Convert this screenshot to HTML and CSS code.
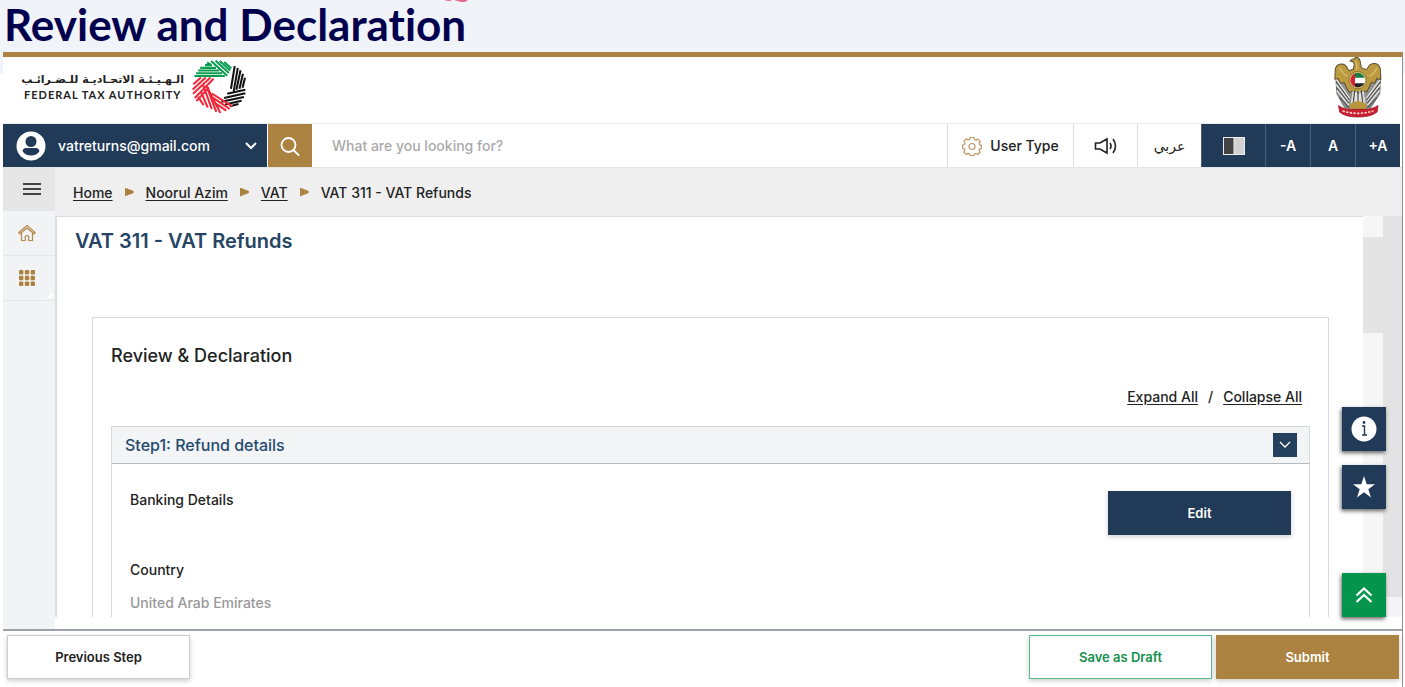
FILE: index.html
```html
<!DOCTYPE html>
<html lang="en">
<head>
<meta charset="utf-8">
<title>Review and Declaration</title>
<link rel="stylesheet" href="styles.css">
</head>
<body>
<div class="page">
  <h1 class="slide-title">Review and Declaration</h1>
  <svg class="smudge" width="40" height="3" viewBox="0 0 40 3"><path d="M4 0h6l2 1h-4zM14 0h14l-3 2h-4z" fill="#e8688c"/></svg>
  <div class="app">
    <header class="brand-bar">
      <div class="brand">
        <div class="brand-text">
          <span class="brand-ar" lang="ar" dir="rtl">الـهـيـئـة الاتحـاديـة للـضـرائـب</span>
          <span class="brand-en">FEDERAL TAX AUTHORITY</span>
        </div>
        <svg class="brand-logo" viewBox="34 20 158 158" fill="none" stroke-width="6" stroke-linecap="butt">
          <g stroke="#0a9c50"><path d="M72 35H92M58 43H104M52 51H114M46 59H122M41 67H130M78 27L88 33M90 23L137 66M103 22L142 58M115 23L146 51M128 26L149 44"/></g>
          <g stroke="#111"><path d="M159 38L148 104M168 43L156 112M176 50L164 107M183 60L173 104M189 72L182 101M190 107L137 119M190 117L128 131M186 128L120 142M179 139L131 150M170 149L145 155"/></g>
          <g stroke="#f2293a"><path d="M60 71L38 91M74 71L36 106M88 71L37 119M97 75L42 131M84 100L47 140M66 92L92 164M77 97L105 172M82 106L117 175M60 112L80 159M52 128L68 152M92 118L152 156M95 130L144 163M102 146L134 168"/></g>
        </svg>
      </div>
      <svg class="emblem" viewBox="44 26 142 182">
        <path d="M48 78l39-4 14 40-8 62h44l-8-62 16-40 38 4-3 58-26 40-34 8h-12l-34-8-22-40z" fill="#8f9190" stroke="#55554f" stroke-width="2"/>
        <path d="M50 92l40 58M50 108l38 50M52 126l36 44M182 92l-42 58M182 108l-40 50M179 126l-36 44" stroke="#e4e4e2" stroke-width="4.500"/>
        <path d="M50 100l39 54M51 117l36 46M182 100l-41 54M180 117l-37 46M60 146l28 31M172 146l-29 31" stroke="#4b4c4b" stroke-width="3"/>
        <path d="M106 29c8-4 15 2 16 12l3 17 14 6c6-2 6-16 18-18 13-2 25 2 25 22l1 26-12-4-6 14-10-2-14 28-12-4-12 8-14-8-14 6-16-30-10 2-8-14-9 2 1-24c0-18 12-22 22-21 14 3 14 16 20 20l12-5 3-15-4-7-9-2c4-5 9-7 12-7z" fill="#bb9a40" stroke="#5e5130" stroke-width="3"/>
        <path d="M108 38q6 14 2 28M60 58q10 20 24 26M172 58q-10 20-24 26" fill="none" stroke="#d8bf70" stroke-width="4"/>
        <path d="M101 126l-7 44M110 128l-3 46M120 128l3 46M130 126l7 44" stroke="#d9d9d6" stroke-width="4"/>
        <path d="M105 127l-5 44M115 128v46M125 127l5 44" stroke="#494a4b" stroke-width="4"/>
        <path d="M91 166l24-10 25 10v15H91z" fill="#b8973d"/>
        <clipPath id="disc"><circle cx="114" cy="95" r="22"/></clipPath>
        <circle cx="114" cy="95" r="26" fill="#d7bd6a" stroke="#76602a" stroke-width="2"/>
        <g clip-path="url(#disc)"><path d="M90 70h50v50H90z" fill="#fff"/><path d="M106 70h32v18h-32z" fill="#177d43"/><path d="M106 104h32v16h-32z" fill="#222"/><path d="M90 70h16v50H90z" fill="#d52033"/></g>
        <path d="M57 171c13 10 29 11 40 11h35c17 0 30-3 43-11l-3 19c-15 12-35 15-57 15s-42-3-55-15z" fill="#c91f30" stroke="#8b1420" stroke-width="2"/>
        <path d="M69 187q45 14 92 0" fill="none" stroke="#f7d9d5" stroke-width="5" stroke-dasharray="7 4"/>
      </svg>
    </header>

    <div class="toolbar">
      <button class="account" type="button">
        <svg class="avatar" viewBox="0 0 30 30"><circle cx="15" cy="15" r="14.5" fill="#fff"/><circle cx="15" cy="10.500" r="5.5" fill="#203a57"/><path d="M6.500 20c1-4 4-3 8.500-3s7.500-1 8.500 3c-3 6-14 6-17 0z" fill="#203a57"/></svg>
        <span class="account-name">vatreturns@gmail.com</span>
        <svg width="12" height="8" viewBox="0 0 12 8" fill="none" stroke="#fff" stroke-width="2"><path d="M1 1l5 5 5-5"/></svg>
      </button>
      <button class="search-button" type="button" aria-label="Search">
        <svg width="20" height="20" viewBox="0 0 20 20" fill="none" stroke="#fff" stroke-width="1.8" stroke-linecap="round"><circle cx="8.500" cy="9" r="7"/><path d="M14 14.500l4.500 4.500"/></svg>
      </button>
      <input class="search-input" type="search" aria-label="Search" placeholder="What are you looking for?">
      <button class="tool user-type" type="button">
        <svg width="20" height="20" viewBox="0 0 20 20" fill="none" stroke="#bf9561" stroke-width="1.200" stroke-linejoin="round"><path d="M8 1.500h4l.6 2.300 1.200.5 2.100-1.200 2.400 2.500-1 2.200.4 1 1.800.5v3l-1.900.8-.5 1.200 1 2-2.300 2.200-2-1-1.300.6-.6 1.400H8.300l-.9-1.600-1.200-.5-2.200 1-2.200-2.300 1.100-2-.5-1.200-1.800-.7V9l1.900-.5.5-1.300-1.100-2.100 2.300-2.200 2 1.100 1.300-.5z"/><circle cx="10" cy="10.500" r="3"/></svg>
        <span>User Type</span>
      </button>
      <button class="tool sound" type="button" aria-label="Listen">
        <svg width="24" height="18" viewBox="0 0 24 18" fill="none" stroke="#222" stroke-width="1.600"><path d="M1.500 6H6l7-4v14l-7-4H1.500zM16 6q2 3 0 6M19 2q5 7 0 14"/></svg>
      </button>
      <button class="tool language" type="button" lang="ar">عربي</button>
      <button class="tool dark contrast" type="button" aria-label="Contrast">
        <svg width="22" height="18" viewBox="0 0 22 18"><path d="M0 0h22v18H0z" fill="#eee"/><path d="M1 1h9.500v16H1z" fill="#444"/><path d="M11.500 1H21v16h-9.500z" fill="#d2d2d2"/></svg>
      </button>
      <button class="tool dark size" type="button">-A</button>
      <button class="tool dark size" type="button">A</button>
      <button class="tool dark size" type="button">+A</button>
    </div>

    <div class="workspace">
      <nav class="rail" aria-label="Main">
        <button class="rail-item menu" type="button" aria-label="Menu"><svg width="18" height="14" viewBox="0 0 18 14" stroke="#444" stroke-width="1.800"><path d="M0 2h18M0 7h18M0 12h18"/></svg></button>
        <button class="rail-item" type="button" aria-label="Home"><svg width="18" height="18" viewBox="0 0 18 18" fill="none" stroke="#b5894a" stroke-width="1.200"><path d="M.8 8.500L9 1.500l8.200 7-1.100 1.300L9 4 1.900 9.800zM3.500 9v7.500h3.800v-4q1.700-2 3.400 0v4h3.800V9"/></svg></button>
        <button class="rail-item apps" type="button" aria-label="Services"><svg width="16" height="16" viewBox="0 0 16 16" fill="#ac8241"><g id="r"><rect width="4.400" height="4.400" rx="1"/><rect x="5.800" width="4.400" height="4.400" rx="1"/><rect x="11.600" width="4.400" height="4.400" rx="1"/></g><use href="#r" y="5.800"/><use href="#r" y="11.600"/></svg></button>
      </nav>

      <div class="main">
        <nav class="crumbs" aria-label="Breadcrumb">
          <a href="#">Home</a><i class="arrow"></i><a href="#">Noorul Azim</a><i class="arrow"></i><a href="#">VAT</a><i class="arrow"></i><span>VAT 311 - VAT Refunds</span>
        </nav>
        <div class="view">
          <main class="content">
            <h2 class="page-title">VAT 311 - VAT Refunds</h2>
            <section class="card">
              <h3 class="card-title">Review &amp; Declaration</h3>
              <div class="toggles"><a href="#">Expand All</a><span>/</span><a href="#">Collapse All</a></div>
              <section class="step">
                <header class="step-head">
                  <h4 class="step-title">Step1: Refund details</h4>
                  <button class="step-toggle" type="button" aria-label="Toggle step"><svg width="12" height="8" viewBox="0 0 12 8" fill="none" stroke="#fff" stroke-width="1.300"><path d="M1 1l5 5 5-5"/></svg></button>
                </header>
                <div class="step-body">
                  <div class="details">
                    <h5 class="label group">Banking Details</h5>
                    <div class="label">Country</div>
                    <div class="value">United Arab Emirates</div>
                  </div>
                  <button class="button edit" type="button">Edit</button>
                </div>
              </section>
            </section>
          </main>
          <div class="inner-scroll"><div class="inner-thumb"></div></div>
          <div class="outer-scroll"><div class="outer-thumb"></div></div>
          <div class="quick">
            <button class="quick-item" type="button" aria-label="Information"><svg width="26" height="26" viewBox="0 0 26 26"><circle cx="13" cy="13" r="12.500" fill="#fff"/><path d="M11 10h2.500v9M11 19h5" stroke="#203a57" stroke-width="1.400" fill="none"/><circle cx="13" cy="6.500" r="1.400" fill="#203a57"/></svg></button>
            <button class="quick-item" type="button" aria-label="Favourite"><svg width="22" height="22" viewBox="0 0 22 22"><path d="M11 0l2.700 8.200H22l-6.700 5 2.700 8.300-7-5.200-7 5.200 2.700-8.300L0 8.200h8.300z" fill="#fff"/></svg></button>
            <button class="quick-item up" type="button" aria-label="Back to top"><svg width="18" height="18" viewBox="0 0 18 18" fill="none" stroke="#fff" stroke-width="2.200"><path d="M1.500 9.500L9 2.500l7.500 7M1.500 16L9 9l7.500 7"/></svg></button>
          </div>
        </div>
      </div>
    </div>

    <footer class="actions">
      <button class="button previous" type="button">Previous Step</button>
      <button class="button draft" type="button">Save as Draft</button>
      <button class="button submit" type="button">Submit</button>
    </footer>
  </div>
</div>
</body>
</html>
```
FILE: styles.css
```css
* { box-sizing: border-box; }
body {
  margin: 0;
  background: linear-gradient(#f0f3f8 74px, #fff 74px);
  font-family: Inter, "DejaVu Sans", sans-serif;
  font-size: 14px;
  font-weight: 500;
  color: #222;
}
button, input { font: inherit; color: inherit; }
button { border: 0; padding: 0; cursor: pointer; }
h1, h2, h3, h4, h5 { margin: 0; }
a { color: inherit; text-underline-offset: 2px; }
svg { display: block; flex: none; }

.page { position: relative; display: flex; flex-direction: column; height: 100vh; }
.slide-title {
  height: 52px;
  padding-left: 4px;
  font: 700 44px/48px Lato, sans-serif;
  font-variant-ligatures: none;
  color: #00004e;
}
.smudge { position: absolute; left: 440px; top: 0; }

.app {
  flex: 1;
  min-height: 0;
  display: flex;
  flex-direction: column;
  margin: 0 2px 0 3px;
  border-top: 5px solid #ac8241;
  border-right: 1px solid #8d929a;
  background: #fff;
}

.brand-bar { display: flex; justify-content: space-between; height: 66px; padding: 0 20px 0 21px; }
.brand { display: flex; align-items: center; gap: 8px; padding-bottom: 6px; }
.brand-text { display: flex; flex-direction: column; width: 160px; }
.brand-ar { font: 700 11px/16px "DejaVu Sans", sans-serif; white-space: nowrap; }
.brand-en { font: 700 11px/14px Lato, sans-serif; letter-spacing: 1px; white-space: nowrap; }
.brand-logo { width: 54px; height: 54px; }
.emblem { width: 48px; height: 61px; }

.toolbar { display: flex; flex: none; height: 45px; padding-right: 2px; border-top: 1px solid #eee; border-bottom: 1px solid #e4e4e4; }
.account {
  display: flex;
  align-items: center;
  gap: 12px;
  width: 264px;
  padding: 0 10px 0 13px;
  background: #203a57;
  color: #fff;
}
.avatar { width: 30px; height: 30px; }
.account-name { flex: 1; text-align: left; }
.search-button { display: grid; place-items: center; width: 44px; margin-left: 1px; background: #ac8241; }
.search-input { flex: 1; min-width: 0; border: 0; padding: 0 20px; background: #fff; outline: 0; }
.search-input::placeholder { color: #aaa; opacity: 1; }
.tool { display: flex; align-items: center; justify-content: center; gap: 8px; border-left: 1px solid #ddd; background: #fff; }
.user-type { width: 126px; }
.sound, .language { width: 64px; }
.language { font-family: "DejaVu Sans", sans-serif; }
.dark { background: #203a57; border-left: 1px solid #4a6079; color: #fff; font-weight: 600; }
.contrast { width: 64px; }
.size { width: 45px; }

.workspace { flex: 1; min-height: 0; display: flex; }
.rail { display: flex; flex-direction: column; width: 52px; background: #f2f3f5; }
.rail-item { display: grid; place-items: center; height: 45px; padding-right: 4px; background: #f2f3f5; border-bottom: 1px solid #e5e6e8; }
.rail-item.menu { height: 43px; padding: 0 0 0 5px; background: #e6e6e6; }
.apps { background: linear-gradient(135deg, transparent 50%, #fff 50%) right 2px bottom 2px / 6px 6px no-repeat #f2f3f5; }
.main { flex: 1; min-width: 0; display: flex; flex-direction: column; background: #efefef; }
.crumbs { display: flex; align-items: center; gap: 12px; height: 48px; padding-left: 18px; }
.arrow { width: 9px; height: 9px; background: #ac8241; clip-path: polygon(0 0, 100% 40%, 100% 60%, 0 100%); }
.view { position: relative; flex: 1; min-height: 0; display: flex; padding-bottom: 12px; background: #fff; }
.content {
  flex: 1;
  min-width: 0;
  overflow: hidden;
  padding: 12px 34px 0 18px;
  border-top: 1px solid #ddd;
  border-left: 2px solid #ddd;
}
.page-title { font-size: 20px; line-height: 24px; font-weight: 600; color: #264464; }
.card { margin: 64px 0 0 17px; padding: 26px 18px 0; border: 1px solid #d8d8d8; }
.card-title { font-size: 18px; line-height: 24px; font-weight: 500; }
.toggles { display: flex; justify-content: flex-end; gap: 10px; margin: 20px 8px 20px 0; line-height: 18px; }
.step { border: 1px solid #d8d8d8; }
.step-head { display: flex; align-items: center; justify-content: space-between; height: 37px; padding: 0 12px 0 13px; background: #f2f4f6; border-bottom: 1px solid #b5b9c0; }
.step-title { font-size: 16px; font-weight: 500; color: #264a6e; }
.step-toggle { display: grid; place-items: center; width: 24px; height: 24px; background: #23415f; }
.step-body { display: flex; justify-content: space-between; align-items: flex-start; height: 240px; padding: 27px 18px 0; }
.label { font-size: 14px; line-height: 18px; font-weight: 500; }
.group { margin-bottom: 52px; }
.value { margin-top: 15px; line-height: 18px; color: #999; }

.button { width: 183px; height: 44px; font-size: 13px; font-weight: 600; box-shadow: 0 2px 5px #0003; }
.edit { background: #203a57; color: #fff; }

.inner-scroll { width: 20px; padding-top: 21px; background: #f6f6f6; }
.inner-thumb { height: 96px; background: #e4e4e4; }
.outer-scroll { width: 19px; background: #f5f5f5; }
.outer-thumb { height: 95%; background: #e3e3e3; }

.quick { position: absolute; right: 16px; bottom: 12px; display: flex; flex-direction: column; gap: 14px; }
.quick-item { display: grid; place-items: center; width: 44px; height: 44px; background: #203a57; box-shadow: -1px 2px 4px #0009; }
.up { margin-top: 50px; background: #05944b; }

.actions { display: flex; gap: 4px; flex: none; height: 58px; padding: 4px 3px 0 4px; border-top: 2px solid #9ba2ab; background: #fff; }
.previous { margin-right: auto; background: #fff; border: 1px solid #ccc; }
.draft { background: #fff; border: 1px solid #5cb98a; color: #15914e; }
.submit { background: #ac8241; color: #fff; }
```
